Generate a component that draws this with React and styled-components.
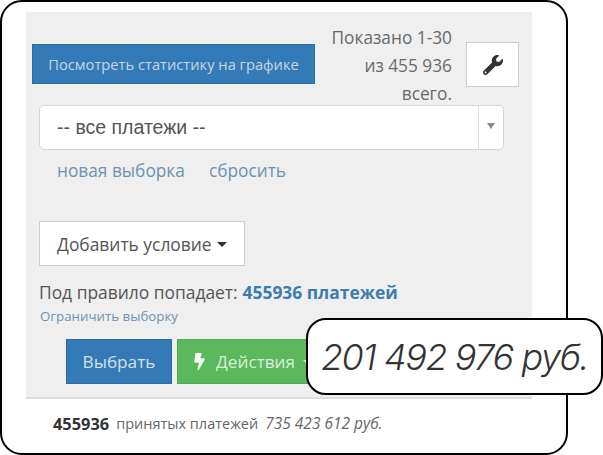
import React from 'react'
import styled, { createGlobalStyle } from 'styled-components'
import { FaBolt, FaWrench } from 'react-icons/fa'

const GlobalStyle = createGlobalStyle`
    html, body {
        margin: 0;
        padding: 0;
        background: #fff;
        font-family: "Open Sans", "Liberation Sans", sans-serif;
        overflow: hidden;
    }
`

const Page = styled.div`
    position: relative;
    width: 603px;
    height: 455px;
`

const Frame = styled.div`
    box-sizing: border-box;
    width: 568px;
    height: 455px;
    border: 2px solid #000;
    border-radius: 22px;
    padding: 10px 34px 0 24px;
`

const Panel = styled.div`
    box-sizing: border-box;
    height: 387px;
    background: #efefef;
    border-bottom: 2px solid #dedede;
    padding-top: 10px;
`

const TopRow = styled.div`
    display: flex;
    align-items: flex-start;
    padding-left: 6px;
    height: 83px;
`

const StatButton = styled.div`
    box-sizing: border-box;
    width: 283px;
    height: 40px;
    margin-top: 22px;
    background: #337ab7;
    border: 1px solid #2e6da4;
    color: #c4d6e5;
    font-size: 14.7px;
    white-space: nowrap;
    display: flex;
    align-items: center;
    justify-content: center;
`

const Shown = styled.div`
    width: 137px;
    text-align: right;
    color: #6a6a6a;
    font-size: 17.3px;
    line-height: 28px;
    margin-top: 2px;
`

const ToolButton = styled.div`
    box-sizing: border-box;
    width: 53px;
    height: 45px;
    margin: 20px 0 0 14px;
    background: #fff;
    border: 1px solid #ccc;
    color: #333;
    font-size: 20px;
    display: flex;
    align-items: center;
    justify-content: center;
`

const Select = styled.div`
    box-sizing: border-box;
    width: 465px;
    height: 45px;
    margin-left: 13px;
    background: #fff;
    border: 1px solid #d5d5d5;
    border-radius: 5px;
    display: flex;
    align-items: center;
`

const SelectValue = styled.div`
    flex: 1;
    padding-left: 17px;
    color: #555;
    font-family: "Liberation Sans", sans-serif;
    font-size: 19.5px;
`

const SelectArrow = styled.div`
    width: 24px;
    height: 100%;
    border-left: 1px solid #ddd;
    display: flex;
    align-items: center;
    justify-content: center;
    &::after {
        content: '';
        margin-bottom: 3px;
        border-left: 4px solid transparent;
        border-right: 4px solid transparent;
        border-top: 6px solid #888;
    }
`

const Links = styled.div`
    display: flex;
    gap: 24px;
    margin: 8px 0 0 31px;
    height: 24px;
    align-items: center;
`

const TextLink = styled.span`
    color: #6c93b5;
    font-size: 17.3px;
`

const AddButton = styled.div`
    box-sizing: border-box;
    width: 206px;
    height: 45px;
    margin: 39px 0 0 13px;
    background: #fff;
    border: 1px solid #ccc;
    color: #555;
    font-size: 17.4px;
    white-space: nowrap;
    display: flex;
    align-items: center;
    padding-left: 17px;
    gap: 5px;
`

const Caret = styled.span`
    width: 0;
    height: 0;
    margin-top: 2px;
    border-left: 5px solid transparent;
    border-right: 5px solid transparent;
    border-top: 5px solid ${props => props.color || '#333'};
`

const RuleLine = styled.div`
    margin: 14px 0 0 13px;
    height: 24px;
    display: flex;
    align-items: center;
    gap: 5px;
    color: #555;
    font-size: 17.4px;
    white-space: nowrap;
`

const RuleCount = styled.b`
    color: #3d7cb2;
    font-weight: 700;
`

const LimitLink = styled.div`
    margin: 3px 0 0 14px;
    height: 18px;
    line-height: 18px;
    color: #6c93b5;
    font-size: 13.3px;
`

const Actions = styled.div`
    display: flex;
    gap: 5px;
    margin: 14px 0 0 40px;
`

const ActionButton = styled.div`
    box-sizing: border-box;
    width: ${props => props.width}px;
    height: 45px;
    background: ${props => props.bg};
    border: 1px solid ${props => props.edge};
    color: ${props => props.fg};
    font-size: 17.2px;
    display: flex;
    align-items: center;
    justify-content: center;
    gap: 8px;
`

const Footer = styled.div`
    display: flex;
    align-items: center;
    gap: 7px;
    margin: 13px 0 0 27px;
    height: 22px;
    color: #666;
    font-size: 14.5px;
    white-space: nowrap;
`

const FooterCount = styled.b`
    color: #333;
    font-size: 16.4px;
`

const FooterSum = styled.i`
    font-size: 15.5px;
`

const Callout = styled.div`
    position: absolute;
    left: 306px;
    top: 318px;
    box-sizing: border-box;
    width: 297px;
    height: 77px;
    background: #fff;
    border: 2px solid #000;
    border-radius: 20px;
    color: #333;
    font-family: "Inter", sans-serif;
    font-size: 36px;
    font-style: italic;
    font-weight: 300;
    letter-spacing: -1.4px;
    white-space: nowrap;
    display: flex;
    align-items: center;
    justify-content: center;
`

export default function App() {
    return (
        <Page>
            <GlobalStyle />
            <Frame>
                <Panel>
                    <TopRow>
                        <StatButton>Посмотреть статистику на графике</StatButton>
                        <Shown>Показано 1-30<br />из 455 936<br />всего.</Shown>
                        <ToolButton><FaWrench /></ToolButton>
                    </TopRow>
                    <Select>
                        <SelectValue>-- все платежи --</SelectValue>
                        <SelectArrow />
                    </Select>
                    <Links>
                        <TextLink>новая выборка</TextLink>
                        <TextLink>сбросить</TextLink>
                    </Links>
                    <AddButton>Добавить условие <Caret /></AddButton>
                    <RuleLine>Под правило попадает: <RuleCount>455936 платежей</RuleCount></RuleLine>
                    <LimitLink>Ограничить выборку</LimitLink>
                    <Actions>
                        <ActionButton width={106} bg="#337ab7" edge="#2e6da4" fg="#d3e0ec">Выбрать</ActionButton>
                        <ActionButton width={150} bg="#5cb85c" edge="#4cae4c" fg="#d9efd9">
                            <FaBolt color="#f2f8f2" /> Действия <Caret color="#e4f3e4" />
                        </ActionButton>
                    </Actions>
                </Panel>
                <Footer>
                    <FooterCount>455936</FooterCount>
                    <span>принятых платежей</span>
                    <FooterSum>735 423 612 руб.</FooterSum>
                </Footer>
            </Frame>
            <Callout>201 492 976 руб.</Callout>
        </Page>
    )
}
